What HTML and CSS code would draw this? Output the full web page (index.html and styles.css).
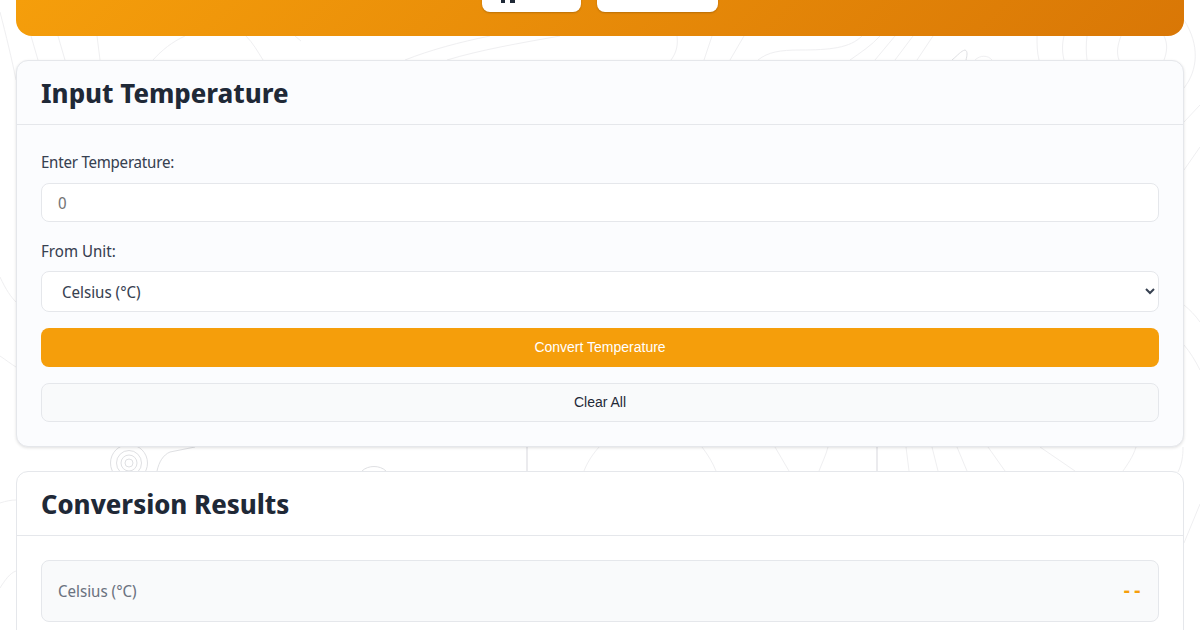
FILE: index.html
```html
<!DOCTYPE html>
<html lang="en">
<head>
<meta charset="utf-8">
<title>Temperature Converter</title>
<link rel="stylesheet" href="styles.css">
</head>
<body>
<svg class="topo" viewBox="0 0 1200 630" width="1200" height="630" fill="none" aria-hidden="true">
  <g class="topo-lines">
    <path d="M0 12C6 35 12 60 16 80"/>
    <path d="M31 36L38 60"/>
    <path d="M58 36L65 60"/>
    <path d="M97 36L100 60"/>
    <path d="M153 60C162 50 172 42 185 36"/>
    <path d="M246 36C253 43 258 52 263 60"/>
    <path d="M295 36L301 41"/>
    <path d="M405 60C430 50 460 42 490 36"/>
    <path d="M447 60C480 50 520 43 560 36"/>
    <path d="M671 60C677 52 678 44 677 36"/>
    <path d="M704 60L712 36"/>
    <path d="M730 60L744 36"/>
    <path d="M758 60C768 52 780 50 800 50C830 50 850 48 862 36"/>
    <path d="M850 60C860 53 872 45 880 36"/>
    <path d="M875 60L895 36"/>
    <path d="M895 60L913 36"/>
    <path d="M917 60L933 36"/>
    <path class="ring" d="M952 60C958 55 961 51 965 50C968 51 967 56 966 60"/>
    <path d="M975 60C980 55 988 55 992 60"/>
    <path d="M1039 60C1037 52 1037 44 1037 36"/>
    <path d="M1064 60C1062 52 1062 44 1064 36"/>
    <path d="M1087 60C1086 52 1086 44 1087 36"/>
    <path d="M1119 60C1116 52 1118 44 1121 36"/>
    <path d="M1164 36C1168 44 1167 52 1164 60"/>
    <path d="M1184 20C1200 45 1198 70 1184 88"/>
    <path d="M1184 122L1200 105"/>
    <path d="M1184 170L1200 147"/>
    <path d="M1184 305C1190 310 1195 315 1200 322"/>
    <path d="M1184 345C1190 352 1195 360 1200 370"/>
    <path d="M0 277C6 290 11 297 16 302"/>
    <path d="M0 356C6 360 11 364 16 367"/>
    <circle class="ring" cx="129" cy="463" r="18.5"/>
    <circle class="ring" cx="129" cy="463" r="12.5"/>
    <circle class="ring" cx="129" cy="463" r="8"/>
    <circle class="ring" cx="129" cy="463" r="4"/>
    <path class="ring" d="M157 471C159 462 163 455 170 452L195 447"/>
    <path class="ring" d="M362 471C368 465 380 465 386 471"/>
    <path class="wide" d="M527 447L527 471"/>
    <path d="M599 447C592 455 587 463 584 471"/>
    <path d="M702 447C708 455 713 463 716 471"/>
    <path d="M775 447L789 471"/>
    <path d="M828 447C826 455 822 463 819 471"/>
    <path class="wide" d="M877 447L877 471"/>
    <path d="M906 447L909 471"/>
    <path d="M932 447L938 471"/>
    <path d="M957 447L967 471"/>
    <path d="M988 447L1005 471"/>
    <path d="M1040 447L1075 471"/>
    <path d="M1136 447C1133 457 1127 465 1123 471"/>
    <path d="M1183 447C1183 456 1182 464 1178 472"/>
    <path d="M0 503C6 501 11 500 16 500"/>
    <path d="M0 588C5 580 10 573 16 571"/>
    <path d="M1184 543L1200 504"/>
  </g>
</svg>
<main class="page">
  <header class="hero">
    <nav class="hero-nav">
      <a class="hero-btn hero-btn-home" href="#"><svg class="hero-icon" viewBox="0 0 16 3" width="16" height="3" aria-hidden="true"><rect x="1" width="4" height="3"/><rect x="10" width="5" height="3"/></svg></a>
      <a class="hero-btn hero-btn-other" href="#"></a>
    </nav>
  </header>

  <section class="card card-input">
    <div class="card-head"><h2>Input Temperature</h2></div>
    <div class="card-body">
      <div class="field">
        <label class="label-tight" for="temp">Enter Temperature:</label>
        <input id="temp" class="control" type="number" placeholder="0">
      </div>
      <div class="field">
        <label for="unit">From Unit:</label>
        <select id="unit" class="control control-select">
          <option>Celsius (°C)</option>
          <option>Fahrenheit (°F)</option>
          <option>Kelvin (K)</option>
        </select>
      </div>
      <button class="btn btn-primary" type="button">Convert Temperature</button>
      <button class="btn btn-secondary" type="button">Clear All</button>
    </div>
  </section>

  <section class="card card-results">
    <div class="card-head"><h2>Conversion Results</h2></div>
    <div class="card-body">
      <div class="result">
        <span class="result-label">Celsius (°C)</span>
        <span class="result-value">--</span>
      </div>
    </div>
  </section>
</main>
</body>
</html>
```
FILE: styles.css
```css
* { box-sizing: border-box; }
html, body { height: 630px; overflow: hidden; }
body {
  margin: 0;
  background: #fff;
  color: #1f2937;
  font-family: "Noto Sans Display", "Noto Sans", sans-serif;
  font-size: 16px;
  position: relative;
}
.topo { position: absolute; left: 0; top: 0; }
.topo-lines path, .topo-lines circle { stroke: #efeff1; stroke-width: 1; }
.topo-lines .ring { stroke: #dfe0e3; }
.topo-lines .wide { stroke: #e4e5e8; stroke-width: 1.5; }
.page {
  position: relative;
  padding: 0 16px;
  display: flex;
  flex-direction: column;
  gap: 24px;
}
.hero {
  height: 36px;
  border-radius: 0 0 16px 16px;
  background: linear-gradient(135deg, #f59e0b, #d97706);
  display: flex;
  justify-content: center;
  align-items: flex-end;
  padding-bottom: 24px;
}
.hero-nav { display: flex; gap: 16px; }
.hero-btn {
  display: flex;
  align-items: flex-start;
  height: 20px;
  margin-top: -8px;
  background: #fff;
  border-radius: 8px;
  box-shadow: 0 1px 2px rgba(0, 0, 0, .2);
  overflow: hidden;
}
.hero-btn-home { width: 99px; padding: 8px 0 0 18px; }
.hero-btn-other { width: 121px; }
.hero-icon { fill: #1f2937; display: block; }
.card {
  background: #fff;
  border: 1px solid #e5e7eb;
  border-radius: 12px;
  overflow: hidden;
}
.card-input {
  background: #fbfcfe;
  box-shadow: 0 1px 3px rgba(0, 0, 0, .12);
}
.card-head {
  height: 64px;
  padding: 2px 24px 0;
  display: flex;
  align-items: center;
  border-bottom: 1px solid #e5e7eb;
}
.card-head h2 { margin: 0; font-size: 27.3px; font-weight: 700; line-height: 1.2; color: #1f2937; }
.card-body { padding: 24px; display: flex; flex-direction: column; gap: 16px; }
.field { display: flex; flex-direction: column; gap: 6px; }
.field label { font-size: 16px; line-height: 27.5px; color: #374151; }
.field .label-tight { letter-spacing: -.25px; }
.control {
  width: 100%;
  height: 39px;
  padding: 2px 16px 0;
  background: #fff;
  border: 1px solid #e5e7eb;
  border-radius: 8px;
  font: 16px "Noto Sans Display", "Noto Sans", sans-serif;
  color: #374151;
  outline: none;
}
.control::placeholder { color: #757575; }
.control-select { height: 41px; padding-top: 0; }
.btn {
  height: 39px;
  width: 100%;
  padding: 0 0 2px;
  border-radius: 8px;
  font: 14px "Liberation Sans", Arial, sans-serif;
  cursor: pointer;
}
.btn-primary { background: #f59e0b; border: 0; color: #fff; }
.btn-secondary { background: #f9fafb; border: 1px solid #e5e7eb; color: #1f2937; }
.card-results { flex: 0 0 auto; }
.result {
  height: 62px;
  padding: 0 16px;
  display: flex;
  justify-content: space-between;
  align-items: center;
  background: #f9fafb;
  border: 1px solid #e5e7eb;
  border-radius: 8px;
}
.result-label { color: #6b7280; font-size: 16px; }
.result-value { color: #f59e0b; font-size: 20px; font-weight: 700; letter-spacing: 4.6px; margin-right: -3px; padding-bottom: 3px; }
```
